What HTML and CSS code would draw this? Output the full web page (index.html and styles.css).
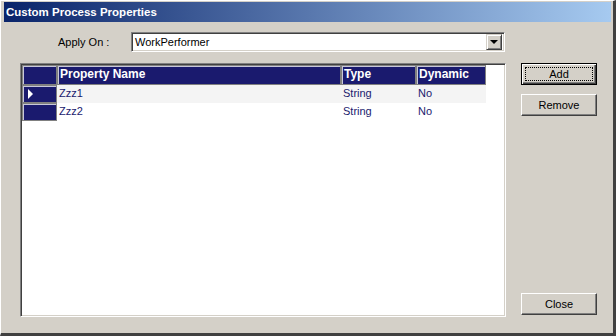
FILE: index.html
```html
<!DOCTYPE html>
<html lang="en">
<head>
    <meta charset="UTF-8">
    <title>Custom Process Properties</title>
    <link rel="stylesheet" href="styles.css">
</head>
<body>

<div class="window">
    <div class="titlebar">Custom Process Properties</div>
    <div class="content">
        <div class="left">
            <div class="apply-row">
                <span class="label">Apply On :</span>
                <div class="combo">
                    <span class="combo-text">WorkPerformer</span>
                    <span class="combo-btn"><span class="arrow"></span></span>
                </div>
            </div>
            <div class="grid">
                <div class="grid-row header">
                    <div class="cell rowhead"></div>
                    <div class="cell col-name">Property Name</div>
                    <div class="cell col-type">Type</div>
                    <div class="cell col-dyn">Dynamic</div>
                </div>
                <div class="grid-row current">
                    <div class="cell rowhead"><span class="pointer"></span></div>
                    <div class="cell col-name">Zzz1</div>
                    <div class="cell col-type">String</div>
                    <div class="cell col-dyn">No</div>
                </div>
                <div class="grid-row">
                    <div class="cell rowhead"></div>
                    <div class="cell col-name">Zzz2</div>
                    <div class="cell col-type">String</div>
                    <div class="cell col-dyn">No</div>
                </div>
            </div>
        </div>
        <div class="right">
            <button class="button default">Add</button>
            <button class="button">Remove</button>
            <button class="button close">Close</button>
        </div>
    </div>
</div>

</body>
</html>
```

FILE: styles.css
```css
body {
    margin: 0;
    background: #d4d0c8;
    font-family: "Liberation Sans", Arial, sans-serif;
    font-size: 11px;
}

.window {
    width: 616px;
    height: 336px;
    box-sizing: border-box;
    background: #d4d0c8;
    border-top: 1px solid #fff;
    border-left: 1px solid #fff;
    border-right: 3px solid #404040;
    border-bottom: 3px solid #404040;
    padding: 1px 0 0 3px;
    display: flex;
    flex-direction: column;
}

.titlebar {
    height: 20px;
    margin-right: 2px;
    background: linear-gradient(to right, #0a246a, #a6caf0);
    color: #fff;
    font-weight: bold;
    font-size: 11.5px;
    line-height: 20px;
    padding-left: 2px;
}

.content {
    flex: 1;
    display: flex;
}

.left {
    margin-left: 16px;
    width: 486px;
}

.apply-row {
    display: flex;
    align-items: center;
    margin-top: 10px;
    height: 20px;
}

.label {
    margin-left: 38px;
    width: 73px;
}

.combo {
    width: 374px;
    height: 20px;
    box-sizing: border-box;
    background: #fff;
    border-top: 1px solid #808080;
    border-left: 1px solid #808080;
    border-right: 1px solid #fff;
    border-bottom: 1px solid #fff;
    box-shadow: inset 1px 1px 0 #404040, inset -1px -1px 0 #d4d0c8;
    display: flex;
    align-items: center;
    padding: 2px;
}

.combo-text {
    flex: 1;
    padding-left: 1px;
}

.combo-btn {
    width: 16px;
    height: 16px;
    box-sizing: border-box;
    background: #d4d0c8;
    border-top: 1px solid #d4d0c8;
    border-left: 1px solid #d4d0c8;
    border-right: 1px solid #404040;
    border-bottom: 1px solid #404040;
    box-shadow: inset 1px 1px 0 #fff, inset -1px -1px 0 #808080;
    display: flex;
    align-items: center;
    justify-content: center;
}

.arrow {
    width: 0;
    height: 0;
    border-left: 4px solid transparent;
    border-right: 4px solid transparent;
    border-top: 4px solid #000;
}

.grid {
    margin-top: 11px;
    height: 254px;
    box-sizing: border-box;
    background: #fff;
    border-top: 1px solid #808080;
    border-left: 1px solid #808080;
    border-right: 1px solid #fff;
    border-bottom: 1px solid #fff;
    box-shadow: inset 1px 1px 0 #404040, inset -1px -1px 0 #d4d0c8;
    padding: 1px 0 0 1px;
}

.grid-row {
    display: flex;
    height: 18px;
    color: #1a1a6e;
}

.grid-row.header {
    height: 20px;
    color: #fff;
    font-weight: bold;
    font-size: 12px;
}

.grid-row.current .col-name,
.grid-row.current .col-type,
.grid-row.current .col-dyn {
    background: #f4f4f4;
}

.cell {
    box-sizing: border-box;
    line-height: 17px;
    padding-left: 2px;
    white-space: nowrap;
}

.header .cell {
    background: #1a1a6e;
    border: 1px solid #808080;
    box-shadow: inset 1px 1px 0 #c8c8d8;
    line-height: 17px;
    padding-left: 2px;
}

.rowhead {
    width: 35px;
    background: #1a1a6e;
    border: 1px solid #808080;
    box-shadow: inset 1px 1px 0 #c8c8d8;
    display: flex;
    align-items: center;
}

.col-name {
    width: 284px;
}

.col-type {
    width: 75px;
}

.col-dyn {
    width: 70px;
}

.pointer {
    width: 0;
    height: 0;
    margin-left: 3px;
    border-top: 5px solid transparent;
    border-bottom: 5px solid transparent;
    border-left: 5px solid #fff;
}

.right {
    margin-left: 15px;
    display: flex;
    flex-direction: column;
    width: 77px;
}

.button {
    width: 76px;
    height: 22px;
    box-sizing: border-box;
    background: #d4d0c8;
    font-family: "Liberation Sans", Arial, sans-serif;
    font-size: 11px;
    color: #000;
    border-top: 1px solid #fff;
    border-left: 1px solid #fff;
    border-right: 1px solid #404040;
    border-bottom: 1px solid #404040;
    box-shadow: inset -1px -1px 0 #808080;
    padding: 0;
    margin-top: 9px;
}

.button.default {
    margin-top: 41px;
    border: 1px solid #000;
    box-shadow: inset 1px 1px 0 #fff, inset -1px -1px 0 #404040, inset -2px -2px 0 #808080;
    outline: 1px dotted #000;
    outline-offset: -5px;
}

.button.close {
    margin-top: auto;
    margin-bottom: 18px;
}
```
